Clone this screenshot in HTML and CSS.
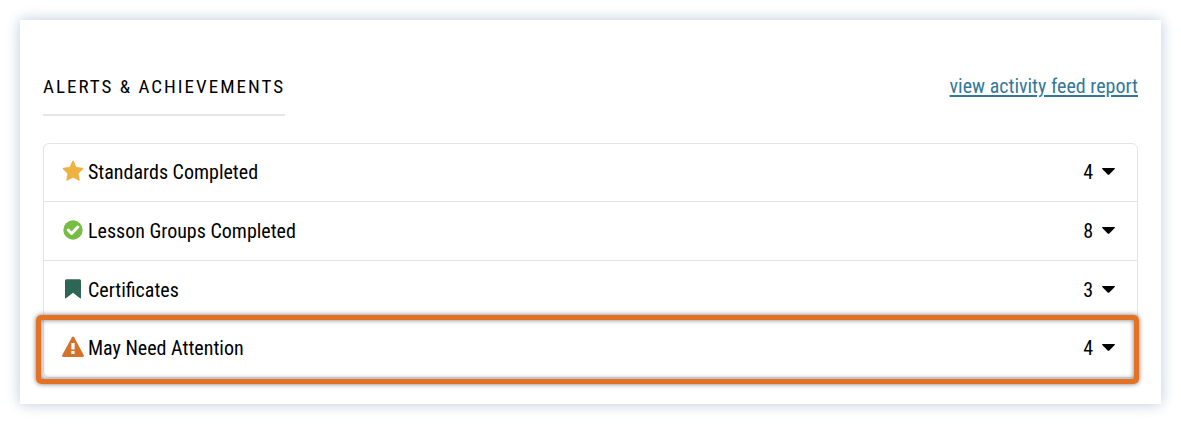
FILE: index.html
```html
<!DOCTYPE html>
<html lang="en">
<head>
<meta charset="utf-8">
<meta name="viewport" content="width=device-width, initial-scale=1">
<title>Alerts &amp; Achievements</title>
<link rel="stylesheet" href="styles.css">
</head>
<body>
<main class="card">
  <header class="card-header">
    <h2 class="card-title">Alerts &amp; Achievements</h2>
    <a class="report-link" href="#report">view activity feed report</a>
  </header>
  <ul class="feed">
    <li class="feed-item">
      <button class="feed-row" type="button" aria-expanded="false">
        <svg class="icon star" viewBox="0 0 22 22" aria-hidden="true"><path d="M10.200 1.200q.8-1.200 1.600 0L14.300 7l6.300.7q1.300.5.4 1.500l-4.500 4.300 1.200 6.300q-.1 1.300-1.300.8L11 17.600l-5.400 3q-1.200.5-1.300-.8l1.200-6.300L1 9.200q-.9-1 .4-1.500L7.700 7z"/></svg>
        <span class="label">Standards Completed</span>
        <span class="count">4</span>
        <svg class="caret" viewBox="0 0 13 7" aria-hidden="true"><path d="M.6 0h11.800q.9.300.3 1L7.300 6.500q-.8.700-1.600 0L.3 1Q-.3.300.6 0z"/></svg>
      </button>
    </li>
    <li class="feed-item">
      <button class="feed-row" type="button" aria-expanded="false">
        <svg class="icon check" viewBox="0 0 22 22" aria-hidden="true"><circle cx="11" cy="11" r="9.700"/><path class="stroke" d="m6.200 11 3.400 3.500 6.200-6.500"/></svg>
        <span class="label">Lesson Groups Completed</span>
        <span class="count">8</span>
        <svg class="caret" viewBox="0 0 13 7" aria-hidden="true"><path d="M.6 0h11.800q.9.300.3 1L7.300 6.500q-.8.700-1.600 0L.3 1Q-.3.300.6 0z"/></svg>
      </button>
    </li>
    <li class="feed-item">
      <button class="feed-row" type="button" aria-expanded="false">
        <svg class="icon bookmark" viewBox="0 0 22 22" aria-hidden="true"><path d="M4.500 1.200h13q1.500 0 1.500 1.500v17q0 1.200-1 .5L11 14.800l-7 5.400q-1 .7-1-.5v-17q0-1.500 1.500-1.500z"/></svg>
        <span class="label">Certificates</span>
        <span class="count">3</span>
        <svg class="caret" viewBox="0 0 13 7" aria-hidden="true"><path d="M.6 0h11.800q.9.300.3 1L7.300 6.500q-.8.700-1.600 0L.3 1Q-.3.300.6 0z"/></svg>
      </button>
    </li>
    <li class="feed-item highlighted">
      <button class="feed-row" type="button" aria-expanded="false">
        <svg class="icon warning" viewBox="0 0 22 22" aria-hidden="true"><path d="M9.900 1.300q1.100-1.500 2.200 0l9.600 17.800q.7 1.900-1.200 1.900h-19q-1.900 0-1.200-1.900z"/><path class="mark" d="M9.400 7h3.200v6.500H9.400zM9.400 15h3.200v3H9.400z"/></svg>
        <span class="label">May Need Attention</span>
        <span class="count">4</span>
        <svg class="caret" viewBox="0 0 13 7" aria-hidden="true"><path d="M.6 0h11.800q.9.300.3 1L7.300 6.500q-.8.700-1.600 0L.3 1Q-.3.300.6 0z"/></svg>
      </button>
    </li>
  </ul>
</main>
</body>
</html>
```
FILE: styles.css
```css
* {
  box-sizing: border-box;
}

body {
  margin: 0;
  padding: 20px;
  background: #fff;
  color: #000;
  font-family: "Proxima Nova Condensed", "Roboto Condensed", "Liberation Sans Narrow", Roboto, sans-serif;
  font-size: 20px;
  line-height: 24px;
}

.card {
  padding: 53px 23px 26px;
  background: #fff;
  box-shadow: 0 0 12px #c3cfe2, 0 0 24px #f2f6f4;
}

.card-header {
  display: flex;
  justify-content: space-between;
  align-items: flex-start;
  margin-bottom: 27px;
}

.card-title {
  margin: 0;
  padding: 2px 0 15px;
  border-bottom: 2px solid #e5e5e5;
  font-size: 19px;
  font-weight: 400;
  letter-spacing: 2px;
  text-transform: uppercase;
}

.report-link {
  padding-top: 1px;
  color: #347899;
  text-decoration-thickness: 2px;
  text-underline-offset: 2px;
}

.feed {
  margin: 0;
  padding: 0;
  border: 1px solid #e4e4e4;
  border-radius: 6px;
  list-style: none;
}

.feed-item + .feed-item {
  border-top: 1px solid #e4e4e4;
}

.feed-row {
  display: flex;
  align-items: center;
  width: 100%;
  padding: 17px 22px 17px 18px;
  border: 0;
  background: none;
  color: inherit;
  font: inherit;
  text-align: left;
}

.feed-item:first-child .feed-row,
.feed-item:last-child .feed-row {
  padding-top: 16px;
}

.icon {
  width: 22px;
  height: 22px;
  margin: 0 4px 2px 0;
}

.star {
  fill: #efb140;
}

.check {
  fill: #78bd43;
}

.stroke {
  fill: none;
  stroke: #fff;
  stroke-width: 3px;
  stroke-linecap: round;
  stroke-linejoin: round;
}

.bookmark {
  fill: #2e6656;
}

.warning {
  fill: #d4712a;
}

.mark {
  fill: #fff;
}

.label {
  flex: 1;
}

.caret {
  width: 13px;
  height: 7px;
  margin: 0 0 2px 9px;
}

.highlighted {
  position: relative;
}

.highlighted::after {
  content: "";
  position: absolute;
  inset: -5px -2px -7px -8px;
  border: 5px solid #e47225;
  border-radius: 5px;
  box-shadow: 0 0 5px #777, inset 0 0 5px #777;
  pointer-events: none;
}
```
